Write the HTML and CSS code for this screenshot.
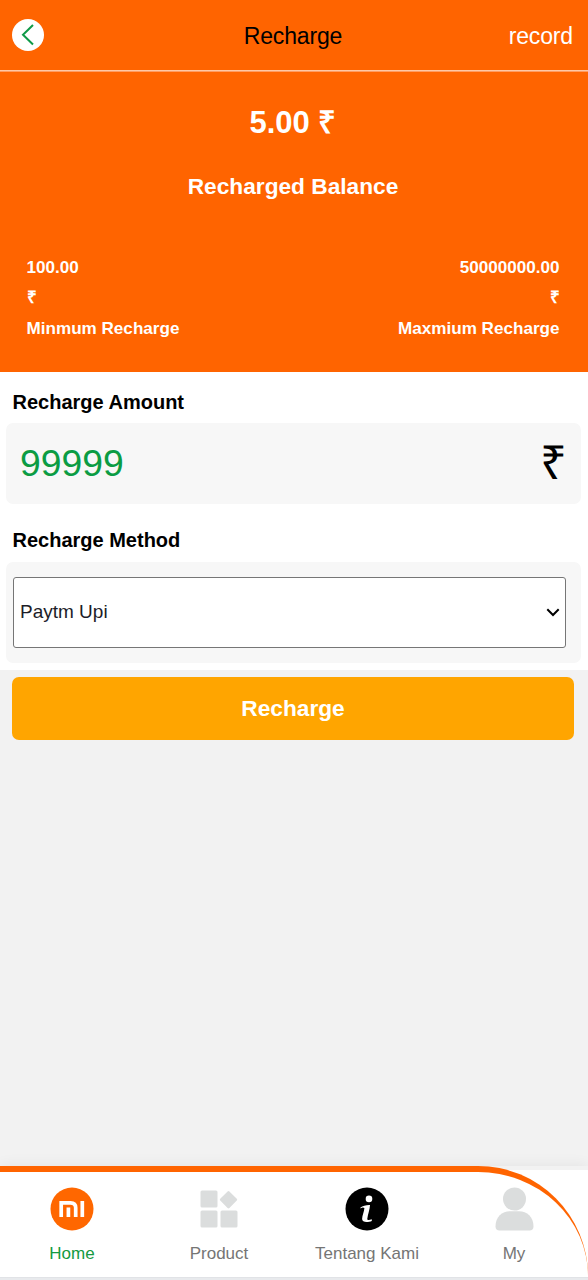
FILE: index.html
```html
<!DOCTYPE html>
<html lang="en">
<head>
<meta charset="utf-8">
<title>Recharge</title>
<link rel="stylesheet" href="styles.css">
</head>
<body>
<div class="page">
  <header class="topbar">
    <svg class="back" viewBox="0 0 32 32"><circle cx="16" cy="16" r="16" fill="#fff"/><path d="M21 6 11 15.800l10 9.700" fill="none" stroke="#0f9a48" stroke-width="2"/></svg>
    <h1 class="title">Recharge</h1>
    <a class="record">record</a>
  </header>
  <section class="summary">
    <div class="balance">5.00 ₹</div>
    <div class="balance-label">Recharged Balance</div>
    <div class="limits">
      <div class="limit"><span>100.00</span><span>₹</span><span>Minmum Recharge</span></div>
      <div class="limit limit-max"><span>50000000.00</span><span>₹</span><span>Maxmium Recharge</span></div>
    </div>
  </section>
  <main class="form">
    <h2 class="label">Recharge Amount</h2>
    <div class="amount"><span class="value">99999</span><span class="currency">₹</span></div>
    <h2 class="label label-method">Recharge Method</h2>
    <div class="method">
      <div class="select"><span>Paytm Upi</span><svg class="chevron" viewBox="0 0 14 9"><path d="m1.300 1.300 5.700 5.700 5.700-5.700" fill="none" stroke="#000" stroke-width="2"/></svg></div>
    </div>
  </main>
  <div class="actions"><button class="submit">Recharge</button></div>
  <footer class="footer">
    <nav class="nav">
      <a class="tab active">
        <svg class="icon" viewBox="0 0 44 44"><circle cx="22" cy="22" r="21.500" fill="#ff6700"/><path d="M11.200 30V15.800h9.300q5.200 0 5.200 5V30M18.400 20.500V30M32.300 14V30" fill="none" stroke="#fff" stroke-width="3.700"/></svg>
        <span>Home</span>
      </a>
      <a class="tab">
        <svg class="icon" viewBox="0 0 44 44" fill="#dbdddd"><rect x="3.500" y="3.500" width="17" height="17" rx="1.500"/><rect x="3.500" y="23.500" width="17" height="17" rx="1.500"/><rect x="23.500" y="23.500" width="17" height="17" rx="1.500"/><rect x="25" y="6.200" width="13" height="13" rx="1.300" transform="rotate(45 31.500 12.700)"/></svg>
        <span>Product</span>
      </a>
      <a class="tab">
        <svg class="icon" viewBox="0 0 44 44"><circle cx="22" cy="22" r="21.500" fill="#000"/><circle cx="24" cy="11.900" r="3.300" fill="#fff"/><path d="M15.500 20.600c2.200-1.900 5.500-2.700 9.500-2.600-.1 4-2.100 9.500-2.700 13.700-.2 1.700 1.800 1.400 4.500.6v1.600c-3.500 1.600-9.800 1.900-9.700-1.800.1-3.500 2.100-7.500 2.300-11-1-.9-2.300-.7-3.900.3z" fill="#fff"/></svg>
        <span>Tentang Kami</span>
      </a>
      <a class="tab">
        <svg class="icon" viewBox="0 0 44 44" fill="#dbdddd"><circle cx="22.500" cy="12" r="11.500"/><path d="M3.500 39.500C3.500 30 10 24.300 18 24.300h9c8 0 14.500 5.700 14.500 15.200 0 2.500-1.500 4-4 4h-30c-2.500 0-4-1.500-4-4z"/></svg>
        <span>My</span>
      </a>
    </nav>
  </footer>
</div>
</body>
</html>
```
FILE: styles.css
```css
* { box-sizing: border-box; }
body { margin: 0; font-family: "Liberation Sans", Arial, sans-serif; background: #f2f2f2; }
.page { display: flex; flex-direction: column; width: 588px; height: 1280px; overflow: hidden; }
.topbar {
  display: grid; grid-template-columns: 1fr auto 1fr; align-items: center;
  height: 71px; padding: 0 15px 0 12px; background: #ff6400;
  border-bottom: 1px solid #ffc8a6; flex-shrink: 0;
}
.back { width: 32px; height: 32px; }
.title { margin: 0; padding: 2px 0 0 1px; font-size: 23px; letter-spacing: -.15px; font-weight: 400; color: #000; }
.record { justify-self: end; padding-top: 2px; font-size: 23px; letter-spacing: -.15px; color: #fff; }
.summary {
  display: flex; flex-direction: column; align-items: center;
  height: 301px; padding-top: 33px; background: #ff6400; color: #fff; font-weight: 700; flex-shrink: 0;
  border-top: 1px solid #ff9c62;
}
.balance { padding-right: 2px; font-size: 31px; line-height: 36px; }
.balance-label { margin-top: 31px; padding-right: 2px; font-size: 22.700px; line-height: 28px; }
.limits { display: flex; justify-content: space-between; align-self: stretch; margin-top: 53px; padding: 0 28.500px 0 26.500px; }
.limit { display: flex; flex-direction: column; font-size: 17.100px; line-height: 30.400px; }
.limit-max { text-align: right; }
.form { height: 298px; padding: 15px 7px 0 6px; background: #fff; flex-shrink: 0; }
.label { margin: 0; padding-left: 6.500px; font-size: 20px; line-height: 30px; color: #000; }
.amount {
  display: flex; justify-content: space-between; align-items: center;
  height: 81px; margin-top: 6px; padding: 0 14px 2px; background: #f7f7f7; border-radius: 7px;
}
.value { padding-top: 1px; font-size: 37.300px; color: #0b9c43; }
.currency { font-size: 47px; color: #000; line-height: 1; }
.label-method { margin-top: 21px; }
.method { height: 101px; margin-top: 7px; padding: 15px 15px 15px 7px; background: #f7f7f7; border-radius: 7px; }
.select {
  display: flex; align-items: center; justify-content: space-between;
  height: 71px; padding: 0 6px 2px; background: #fff; border: 1px solid #767676; border-radius: 3px;
  font-size: 19px; color: #1d1d28;
}
.chevron { width: 14px; height: 9px; margin: 2px -1px 0 0; }
.actions { flex: 1; padding: 7px 14px 0 12px; }
.submit {
  display: block; width: 100%; height: 63px; border: 0; border-radius: 7px; padding: 0;
  background: #ffa500; color: #fff; font: 700 22.700px "Liberation Sans", Arial, sans-serif;
}
.footer {
  flex-shrink: 0; height: 114px; padding-bottom: 3px;
  background: linear-gradient(#f2f2f2 4px, #fff 4px, #fff 110px, #dadce0 111px, #e8eaed 112px);
  box-shadow: 0 0 14px rgba(0, 0, 0, .07);
}
.nav {
  display: grid; grid-template-columns: repeat(4, 1fr); height: 111px; padding: 15px 0 0;
  border-top: 6px solid #ff6400; border-top-right-radius: 110px; background: #fff;
}
.tab { display: flex; flex-direction: column; align-items: center; font-size: 17px; line-height: 20px; color: #757575; padding-right: 3px; }
.tab:nth-child(2) { padding-right: 3px; }
.tab:nth-child(3) { padding-right: 1px; }
.tab:nth-child(4) { padding-right: 1px; }
.active { color: #149a42; }
.icon { width: 44px; height: 44px; margin-bottom: 13px; }
```
